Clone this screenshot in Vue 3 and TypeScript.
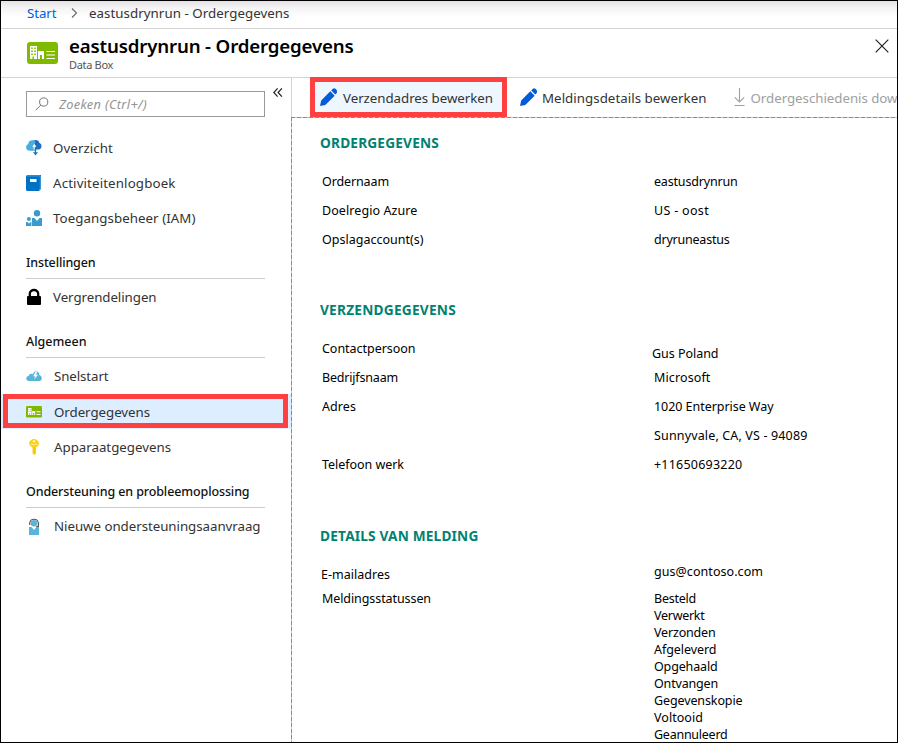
<script setup lang="ts">
import type { Directive } from 'vue'

interface NavItem { label: string; icon: string; width: number; selected?: boolean; inset?: boolean }
interface NavGroup { title?: string; titleWidth?: number; items: NavItem[] }
interface Cell { text: string; width: number; kind?: string }
interface Section { title: string; width: number; labels: Cell[]; values: Cell[] }

// Tracks a run of text so that it spans the given width in pixels.
const vFit: Directive<HTMLElement, number> = {
  mounted(el, binding) {
    const natural = el.getBoundingClientRect().width
    const count = (el.textContent ?? '').length
    if (count > 0) el.style.letterSpacing = `${(binding.value - natural) / count}px`
  },
}

const groups: NavGroup[] = [
  {
    items: [
      { label: 'Overzicht', icon: 'overview', width: 60 },
      { label: 'Activiteitenlogboek', icon: 'log', width: 122.5 },
      { label: 'Toegangsbeheer (IAM)', icon: 'people', width: 142.5 },
    ],
  },
  { title: 'Instellingen', titleWidth: 69.5, items: [{ label: 'Vergrendelingen', icon: 'lock', width: 103.5 }] },
  {
    title: 'Algemeen',
    titleWidth: 60.5,
    items: [
      { label: 'Snelstart', icon: 'quick', width: 54.5, inset: true },
      { label: 'Ordergegevens', icon: 'order', width: 96, selected: true, inset: true },
      { label: 'Apparaatgegevens', icon: 'key', width: 117, inset: true },
    ],
  },
  {
    title: 'Ondersteuning en probleemoplossing',
    titleWidth: 223.5,
    items: [{ label: 'Nieuwe ondersteuningsaanvraag', icon: 'support', width: 206.5, inset: true }],
  },
]

const sections: Section[] = [
  {
    title: 'ORDERGEGEVENS',
    width: 119,
    labels: [
      { text: 'Ordernaam', width: 67 },
      { text: 'Doelregio Azure', width: 95.5 },
      { text: 'Opslagaccount(s)', width: 101.5 },
    ],
    values: [
      { text: 'eastusdrynrun', width: 83.5 },
      { text: 'US - oost', width: 55 },
      { text: 'dryruneastus', width: 75.5 },
    ],
  },
  {
    title: 'VERZENDGEGEVENS',
    width: 136,
    labels: [
      { text: 'Contactpersoon', width: 93.5 },
      { text: 'Bedrijfsnaam', width: 76 },
      { text: 'Adres', width: 34 },
      { text: '', width: 0 },
      { text: 'Telefoon werk', width: 82 },
    ],
    values: [
      { text: 'Gus Poland', width: 66.5, kind: 'lowered' },
      { text: 'Microsoft', width: 56.5 },
      { text: '1020 Enterprise Way', width: 119.5 },
      { text: 'Sunnyvale, CA, VS - 94089', width: 153.5 },
      { text: '+11650693220', width: 88.5 },
    ],
  },
  {
    title: 'DETAILS VAN MELDING',
    width: 158.5,
    labels: [
      { text: 'E-mailadres', width: 69, kind: 'outdent' },
      { text: 'Meldingsstatussen', width: 109, kind: 'compact' },
    ],
    values: [
      { text: 'gus@contoso.com', width: 109, kind: 'raised' },
      { text: 'Besteld', width: 42, kind: 'compact' },
      { text: 'Verwerkt', width: 50.5, kind: 'compact' },
      { text: 'Verzonden', width: 61.5, kind: 'compact' },
      { text: 'Afgeleverd', width: 62.5, kind: 'compact' },
      { text: 'Opgehaald', width: 63.5, kind: 'compact' },
      { text: 'Ontvangen', width: 64, kind: 'compact' },
      { text: 'Gegevenskopie', width: 88.5, kind: 'compact' },
      { text: 'Voltooid', width: 49, kind: 'compact' },
      { text: 'Geannuleerd', width: 73.5, kind: 'compact' },
    ],
  },
]
</script>

<template>
  <div class="window">
    <nav class="breadcrumb">
      <a class="crumb-link"><span v-fit="29.5">Start</span></a>
      <svg class="crumb-arrow" width="8" height="10" viewBox="0 0 8 10"><path d="M1 .5 5.500 5 1 9.500" fill="none" stroke="#666" stroke-width="1.1" /></svg>
      <span v-fit="200.5">eastusdrynrun - Ordergegevens</span>
    </nav>

    <header class="header">
      <svg class="header-icon" width="31" height="22" viewBox="0 0 31 22">
        <rect width="31" height="22" rx="3" fill="#7fba00" />
        <path d="M3 4H10V17H3ZM11 9H17V17H15V13H13V17H11Z" fill="#fff" />
        <path d="M4.2 5.5H5.8V7H4.2ZM7.2 5.5H8.8V7H7.2ZM4.2 8.5H5.8V10H4.2ZM7.2 8.5H8.8V10H7.2ZM4.2 11.5H5.8V13H4.2ZM7.2 11.5H8.8V13H7.2ZM5.5 14.5H7V17H5.5Z" fill="#7fba00" />
        <path d="M19.5 9.5H28M19.5 13H28M19.5 16.5H28" stroke="#fff" stroke-width="1.2" />
      </svg>
      <div class="header-text">
        <h1 class="title"><span v-fit="284.5">eastusdrynrun - Ordergegevens</span></h1>
        <div class="subtitle"><span v-fit="44">Data Box</span></div>
      </div>
      <svg class="close" width="14" height="14" viewBox="0 0 14 14"><path d="M.7.7 13.3 13.3M13.3.7.7 13.3" stroke="#222" stroke-width="1.2" /></svg>
    </header>

    <div class="body">
      <aside class="sidebar">
        <div class="search-row">
          <div class="search">
            <svg width="14" height="14" viewBox="0 0 14 14"><g fill="none" stroke="#767676" stroke-width="1"><circle cx="8.7" cy="5" r="4.1" /><path d="M5.8 8.1.6 13.3" /></g></svg>
            <span v-fit="88" class="placeholder">Zoeken (Ctrl+/)</span>
          </div>
          <svg class="collapse" width="10" height="9" viewBox="0 0 10 9"><path d="M4.6.4.8 4.5 4.6 8.6M8.9.4 5.1 4.5 8.9 8.6" fill="none" stroke="#222" stroke-width="1.2" /></svg>
        </div>

        <div v-for="(group, gi) in groups" :key="gi" class="group">
          <h2 v-if="group.title" class="group-title"><span v-fit="group.titleWidth ?? 0">{{ group.title }}</span></h2>
          <div v-for="item in group.items" :key="item.label" class="item" :class="{ selected: item.selected, inset: item.inset }">
            <svg class="item-icon" width="16" height="16" viewBox="0 0 16 16">
              <g v-if="item.icon === 'overview'">
                <path d="M7 .7C10.500-.8 13 .8 13.400 3 16.400 3.600 16.200 9.200 12.800 9.500H7Z" fill="#1f6fbf" />
                <path d="M4.400 10.800C-.6 11.200-1 5 2.200 4.200 2 .8 6 -.6 9 .8V10.800Z" fill="#45aede" />
                <path d="M8.200 9.500V5.200M6.800 6.800 8.300 5 9.800 6.800" fill="none" stroke="#fff" stroke-width="1.200" />
                <path d="M9.500 7V13" stroke="#1f6fbf" stroke-width="1.300" /><path d="M7 12.300H12L9.500 15.500Z" fill="#1f6fbf" />
              </g>
              <g v-else-if="item.icon === 'log'">
                <path d="M1.500 0H15V14.500H13.500V16H1.500A1.500 1.500 0 0 1 0 14.500V1.500A1.500 1.500 0 0 1 1.500 0Z" fill="#0072c6" />
                <path d="M1 .9H14.300V14.500" fill="none" stroke="#5aa7df" stroke-width=".8" />
                <path d="M4 4H10.500V7H4Z" fill="#fff" />
              </g>
              <g v-else-if="item.icon === 'people'" fill="#3a9bcf">
                <circle cx="11" cy="3.200" r="3.200" /><circle cx="2.900" cy="9" r="2" />
                <path d="M6 8H8.500L11 11 13.500 8H16V16H6ZM0 12H1.500L3 13.500 4.500 12H5.400V16H0Z" />
              </g>
              <g v-else-if="item.icon === 'lock'">
                <path d="M1 8Q1 7 2 7H14Q15 7 15 8V15Q15 16 14 16H2Q1 16 1 15Z" />
                <path d="M3.800 8V4.800a4.200 3.800 0 0 1 8.400 0V8" fill="none" stroke="#000" stroke-width="2.300" />
              </g>
              <g v-else-if="item.icon === 'quick'">
                <path d="M3 13C-.6 13-.6 8.200 2.700 8 3 6 5.200 5.200 6.700 6.200 8.200 1.800 13.400 2.300 13.300 7 16.800 7.600 16.500 13 13.500 13Z" fill="#59b4d9" />
                <path d="M9.700 3.500 7.200 8.300H9.300L8 11.500 12.200 6.700H9.900L11.500 3.500Z" fill="#fff" />
              </g>
              <g v-else-if="item.icon === 'order'">
                <rect y="2" width="16" height="11.500" rx="1.300" fill="#7fba00" />
                <path d="M2 4H5.500V11H2ZM6.200 7H9.200V11H8.200V9H7.200V11H6.200ZM10.500 7.300H14.500V8.300H10.500ZM10.500 10H14.500V11H10.500Z" fill="#fff" />
                <path d="M2.700 5H3.300V6H2.700ZM4.300 5H4.900V6H4.300ZM2.700 7H3.300V8H2.700ZM4.300 7H4.900V8H4.300ZM3.300 9.200H4.200V11H3.300Z" fill="#7fba00" />
              </g>
              <g v-else-if="item.icon === 'key'">
                <path d="M8 0C10 0 13 2 13 4.600 13 6.500 11.500 7.800 10 8.500V14.500L8.300 16 6.500 14.500V8.500C5 8 3 6.500 3 4.600 3 2 6 0 8 0Z" fill="#fcd116" />
                <circle cx="8" cy="2.300" r="1.100" fill="#fff" /><path d="M4.500 5.400H11.500" stroke="#fff2b0" stroke-width=".8" /><path d="M8.300 8V14.500" stroke="#edb800" stroke-width=".7" />
              </g>
              <g v-else>
                <path d="M3.700 7V5A4.400 4.400 0 0 1 12.400 5V8.200L10 9" fill="none" stroke="#555" stroke-width="1.200" />
                <circle cx="8" cy="5.200" r="3.300" fill="#59b4d9" />
                <path d="M3 9H5.500L8 12 10.500 9H13V17H3Z" fill="#59b4d9" />
              </g>
            </svg>
            <span v-fit="item.width">{{ item.label }}</span>
            <div v-if="item.selected" class="marker" />
          </div>
        </div>
      </aside>

      <main class="main">
        <div class="commands">
          <div class="command active">
            <svg width="17" height="18" viewBox="0 0 17 18"><path d="M0 18 1.200 12.500 10.300 3.300 14.700 7.700 5.300 17Z M11.200 2.400 12.700.9Q14.200-.3 15.900 1.200T16.800 5L15.400 6.600Z" fill="#015cda" /></svg>
            <span v-fit="150">Verzendadres bewerken</span>
          </div>
          <div class="command">
            <svg width="17" height="18" viewBox="0 0 17 18"><path d="M0 18 1.200 12.500 10.300 3.300 14.700 7.700 5.300 17Z M11.200 2.400 12.700.9Q14.200-.3 15.900 1.200T16.800 5L15.400 6.600Z" fill="#015cda" /></svg>
            <span v-fit="164.5">Meldingsdetails bewerken</span>
          </div>
          <div class="command disabled">
            <svg width="12" height="18" viewBox="0 0 12 18"><path d="M5.500 0V14M.8 9.300 5.500 14 10.200 9.300M.5 17.500H10.500" fill="none" stroke="#a0a0a0" stroke-width="1.100" /></svg>
            <span v-fit="147">Ordergeschiedenis dow</span>
          </div>
        </div>

        <div class="content">
          <section v-for="section in sections" :key="section.title" class="section">
            <h3 class="section-title"><span v-fit="section.width">{{ section.title }}</span></h3>
            <div class="fields">
              <div class="column labels">
                <div v-for="(cell, i) in section.labels" :key="i" class="cell" :class="cell.kind"><span v-fit="cell.width">{{ cell.text }}</span></div>
              </div>
              <div class="column">
                <div v-for="(cell, i) in section.values" :key="i" class="cell" :class="cell.kind"><span v-fit="cell.width">{{ cell.text }}</span></div>
              </div>
            </div>
          </section>
        </div>
      </main>
    </div>
  </div>
</template>

<style>
body { background: #fff; overflow: hidden; }
</style>

<style scoped>
* { box-sizing: border-box; }
.window {
  width: 898px; height: 743px; overflow: hidden; border: 1px solid #000;
  display: flex; flex-direction: column; background: #fff; color: #333;
  font-family: "Noto Sans", "Open Sans", sans-serif; font-size: 13.300px; white-space: nowrap;
}
.window span { flex: none; }
h1, h2, h3 { margin: 0; }
svg { flex: none; display: block; }
.breadcrumb {
  height: 28px; flex: none; display: flex; align-items: center; padding: 0 0 3px 26px;
  border-bottom: 1px solid #d4d4d4; background: linear-gradient(#e4e1e4, #f5f4f5 7px, #fff 16px);
}
.crumb-link { color: #015cda; width: 44px; }
.crumb-arrow { margin-right: 10px; }
.header { height: 49px; flex: none; display: flex; padding: 0 8px 0 26px; border-bottom: 1px solid #d4d4d4; }
.header-icon { margin-top: 13px; }
.header-text { margin-left: 11px; flex: 1; }
.title { height: 34px; line-height: 34px; color: #000; font-size: 18.700px; font-weight: 600; }
.subtitle { font-size: 11px; line-height: 14px; margin-top: -5px; color: #555; }
.close { margin-top: 10px; }
.body { flex: 1; min-height: 0; display: flex; }
.sidebar { width: 290px; flex: none; }
.search-row { height: 52px; display: flex; padding: 13px 0 0 25px; }
.search { width: 239px; height: 26px; border: 1px solid #999; display: flex; align-items: center; padding-left: 8px; }
.placeholder { margin-left: 10px; font-style: italic; font-size: 12.800px; color: #949494; }
.collapse { margin: -3px 0 0 8px; }
.group-title { height: 44px; margin: 0 26px 0 25px; padding-top: 18px; line-height: 20px; border-bottom: 1px solid #ccc; font-size: 12.500px; font-weight: 500; color: #111; }
.item { height: 35px; display: flex; align-items: center; position: relative; padding-left: 25px; }
.item-icon { margin-right: 11px; overflow: visible; }
.inset .item-icon { margin-right: 12px; }
.selected { margin-top: 1px; background: #dceeff; }
.marker { position: absolute; left: 2px; right: 3px; top: 0; height: 34px; border: 5px solid #ff4040; }
.main { flex: 1; min-width: 0; display: flex; flex-direction: column; }
.commands { height: 39px; flex: none; display: flex; align-items: center; border-left: 1px solid #d4d4d4; }
.command { height: 40px; margin-top: -1px; display: flex; align-items: center; gap: 5px; padding: 0 13px; }
.command svg { margin-top: -1px; }
.command span { padding-top: 1px; }
.active { margin-left: 18px; padding: 0 9px 0 5px; border: 5px solid #ff4040; background: #eef6ff; gap: 6px; }
.disabled { color: #a0a0a0; padding: 0 0 0 14px; }
.content {
  flex: 1; padding: 12px 0 0 29px; color: #000;
  background:
    repeating-linear-gradient(90deg, #1eb0ea 0 4px, #c8c8c8 4px 6px) top left / 100% 1px no-repeat,
    repeating-linear-gradient(180deg, #1eb0ea 0 4px, #c8c8c8 4px 6px) top left / 1px 100% no-repeat;
}
.section { margin-bottom: 42px; }
.section + .section { margin-bottom: 43px; }
.section-title { height: 28px; line-height: 27px; font-size: 13.700px; font-weight: 700; color: #008272; }
.fields { display: flex; margin-top: 10px; padding-left: 2px; font-size: 12.500px; }
.labels { width: 332px; }
.cell { height: 29px; display: flex; align-items: center; }
.lowered { padding-top: 9px; margin-left: -2px; }
.raised { padding-bottom: 6px; margin-bottom: 1px; }
.outdent { margin-left: -1px; margin-bottom: 1px; }
.compact { height: 17px; }
</style>
